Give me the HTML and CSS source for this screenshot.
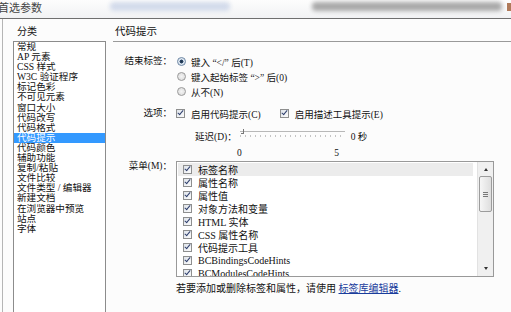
FILE: index.html
```html
<!DOCTYPE html>
<html lang="zh-CN">
<head>
    <meta charset="UTF-8">
    <title>首选参数</title>
    <link rel="stylesheet" href="styles.css">
</head>
<body>
    <div class="titlebar">
        <span class="titulo">首选参数</span>
        <span class="blur azul"></span>
        <span class="blur cinza"></span>
        <span class="fechar"></span>
    </div>
    <div class="janela">
        <aside class="categorias">
            <p class="cabecalho">分类</p>
            <ul class="lista">
                <li>常规</li>
                <li>AP 元素</li>
                <li>CSS 样式</li>
                <li>W3C 验证程序</li>
                <li>标记色彩</li>
                <li>不可见元素</li>
                <li>窗口大小</li>
                <li>代码改写</li>
                <li>代码格式</li>
                <li class="ativo">代码提示</li>
                <li>代码颜色</li>
                <li>辅助功能</li>
                <li>复制/粘贴</li>
                <li>文件比较</li>
                <li>文件类型 / 编辑器</li>
                <li>新建文档</li>
                <li>在浏览器中预览</li>
                <li>站点</li>
                <li>字体</li>
            </ul>
        </aside>
        <section class="painel">
            <p class="cabecalho titulo-painel">代码提示</p>

            <div class="linha linha-radios">
                <span class="rotulo">结束标签：</span>
                <div class="radios">
                    <label><span class="radio marcado"></span>键入 “&lt;/” 后(T)</label>
                    <label><span class="radio"></span>键入起始标签 “&gt;” 后(0)</label>
                    <label><span class="radio"></span>从不(N)</label>
                </div>
            </div>

            <div class="linha linha-opcoes">
                <span class="rotulo">选项：</span>
                <div class="opcoes">
                    <label><span class="check"></span>启用代码提示(C)</label>
                    <label><span class="check"></span>启用描述工具提示(E)</label>
                </div>
            </div>

            <div class="linha linha-atraso">
                <span class="rotulo"></span>
                <div class="atraso">
                    <span>延迟(D)：</span>
                    <span class="slider"><span class="pino"></span></span>
                    <span class="valor">0 秒</span>
                </div>
            </div>

            <div class="linha linha-escala">
                <span class="rotulo"></span>
                <div class="escala"><span>0</span><span>5</span></div>
            </div>

            <div class="linha linha-menu">
                <span class="rotulo">菜单(M)：</span>
                <div class="menu">
                    <ul class="itens">
                        <li class="selecionado"><span class="check"></span>标签名称</li>
                        <li><span class="check"></span>属性名称</li>
                        <li><span class="check"></span>属性值</li>
                        <li><span class="check"></span>对象方法和变量</li>
                        <li><span class="check"></span>HTML 实体</li>
                        <li><span class="check"></span>CSS 属性名称</li>
                        <li><span class="check"></span>代码提示工具</li>
                        <li><span class="check"></span>BCBindingsCodeHints</li>
                        <li><span class="check"></span>BCModulesCodeHints</li>
                    </ul>
                    <div class="rolagem">
                        <span class="seta cima"></span>
                        <span class="polegar"><i></i><i></i><i></i></span>
                        <span class="seta baixo"></span>
                    </div>
                </div>
            </div>

            <div class="linha linha-rodape">
                <span class="rotulo"></span>
                <p class="rodape">若要添加或删除标签和属性，请使用 <a href="#">标签库编辑器</a>.</p>
            </div>
        </section>
    </div>
</body>
</html>
```

FILE: styles.css
```css
body {
    margin: 0;
    width: 511px;
    height: 312px;
    overflow: hidden;
    background: #fcfcfc;
    color: #111;
    font-family: 'Liberation Serif', 'Noto Sans CJK SC', serif;
    font-size: 10px;
}

p, ul { margin: 0; padding: 0; }
ul { list-style: none; }

/* barra de titulo */
.titlebar {
    position: relative;
    height: 18px;
    overflow: hidden;
    background: linear-gradient(#fdfdfd, #f1f2f4);
    border-bottom: 1px solid #6f6f6f;

    .titulo {
        position: relative;
        z-index: 1;
        display: block;
        margin-left: -2px;
        padding-top: 2px;
        font-size: 11px;
        line-height: 13px;
        color: #444;
    }
    .blur {
        position: absolute;
        top: 2px;
        height: 9px;
        border-radius: 4px;
        filter: blur(2px);
    }
    .azul { left: 110px; width: 120px; background: #d3dbeb; }
    .cinza { left: 312px; width: 190px; background: #a9a9a9; }
    .fechar {
        position: absolute;
        right: 0;
        top: 3px;
        width: 4px;
        height: 8px;
        background: #b07a5a;
    }
}

.janela {
    display: flex;
    height: 293px;
    margin-left: 2px;
    border-left: 1px solid #b5b5b5;
}

.cabecalho {
    height: 18px;
    padding-top: 4px;
    line-height: 18px;
}

/* coluna de categorias */
.categorias {
    width: 93px;
    margin-left: 10px;
    flex: none;

    .cabecalho { padding-left: 4px; }

    .lista {
        height: 280px;
        border: 1px solid #8c8c8c;
        border-bottom: none;
        background: #fff;

        li {
            height: 10.1px;
            padding-left: 3px;
            font-size: 9.6px;
            line-height: 10.1px;
            white-space: nowrap;
        }
        li.ativo {
            background: #3399ff;
            color: #fff;
        }
    }
}

/* painel da direita */
.painel {
    flex: 1;
    margin-left: 7px;

    .titulo-painel {
        height: 18px;
        padding-left: 2px;
        border-bottom: 1px solid #9a9a9a;
        font-size: 10.5px;
    }
}

.linha {
    display: flex;
    gap: 4px;
    font-size: 9.5px;

    .rotulo {
        width: 59px;
        flex: none;
        text-align: right;
        line-height: 15px;
        white-space: nowrap;
    }
}

.linha-radios { margin-top: 12px; }
.linha-opcoes { margin-top: 7px; }
.linha-atraso { margin-top: 7px; }
.linha-escala { margin-top: 4px; }
.linha-menu { margin-top: 2px; }
.linha-menu .rotulo { line-height: 10px; }
.linha-rodape { margin-top: 5px; }

.radios label, .opcoes label {
    display: flex;
    align-items: center;
    height: 15px;
    white-space: nowrap;
}

.radio {
    width: 7px;
    height: 7px;
    margin: 0 5px 0 1px;
    border: 1px solid #9a9a9a;
    border-radius: 50%;
    background: radial-gradient(#f4f4f4, #d8d8d8);
}
.radio.marcado {
    background: radial-gradient(#1c2f45 0, #2e4a6a 35%, #d7e2ee 45%, #eef2f6 100%);
    border-color: #6c86a3;
}

.check {
    display: inline-block;
    position: relative;
    width: 7px;
    height: 7px;
    margin-right: 6px;
    border: 1px solid #8e8f8f;
    background: linear-gradient(135deg, #dfe4ea, #fbfbfb);
    flex: none;
}
.check::after {
    content: "";
    position: absolute;
    left: 2px;
    top: -1px;
    width: 2px;
    height: 5px;
    border: solid #2f3f6e;
    border-width: 0 1.5px 1.5px 0;
    transform: rotate(40deg);
}

.opcoes {
    display: flex;
    gap: 19px;
}

.atraso {
    display: flex;
    align-items: center;
    height: 15px;
    padding-left: 19px;
    white-space: nowrap;

    .slider {
        position: relative;
        width: 105px;
        height: 8px;
        margin: 0 6px 0 3px;
        border-top: 1px solid #b8b8b8;
        background: repeating-linear-gradient(90deg, #c4c4c4 0 1px, transparent 1px 5px) left 3px / 100% 2px no-repeat;
    }
    .pino {
        position: absolute;
        left: 1px;
        top: -3px;
        width: 2px;
        height: 4px;
        border: solid #777;
        border-width: 0 1px 1px 0;
    }
}

.escala {
    display: flex;
    justify-content: space-between;
    width: 102px;
    margin-left: 61px;
    line-height: 12px;
}

/* lista do menu */
.menu {
    display: flex;
    width: 316px;
    height: 114px;
    border: 1px solid #999;
    background: #fff;

    .itens {
        flex: 1;
        padding: 1px 4px 0 1px;
        overflow: hidden;
        font-size: 10px;

        li {
            display: flex;
            align-items: center;
            height: 13px;
            padding-left: 5px;
            white-space: nowrap;
        }
        li.selecionado { background: #ececec; }
    }
}

.rolagem {
    display: flex;
    flex-direction: column;
    align-items: center;
    width: 15px;
    flex: none;
    background: #f0f0f0;
    border-left: 1px solid #e2e2e2;

    .seta {
        width: 0;
        height: 0;
        border: 2px solid transparent;
    }
    .cima { margin-top: 6px; border-bottom: 3px solid #333; border-top: none; }
    .baixo { margin-top: auto; margin-bottom: 6px; border-top: 3px solid #333; border-bottom: none; }

    .polegar {
        display: flex;
        flex-direction: column;
        justify-content: center;
        align-items: center;
        gap: 1px;
        width: 11px;
        height: 34px;
        margin-top: 5px;
        border: 1px solid #9c9c9c;
        border-radius: 2px;
        background: linear-gradient(90deg, #f6f6f6, #dedede);

        i {
            width: 5px;
            height: 1px;
            background: #777;
        }
    }
}

.rodape {
    line-height: 14px;
    font-size: 10px;
    white-space: nowrap;

    a { color: #1a3d9c; }
}
```
